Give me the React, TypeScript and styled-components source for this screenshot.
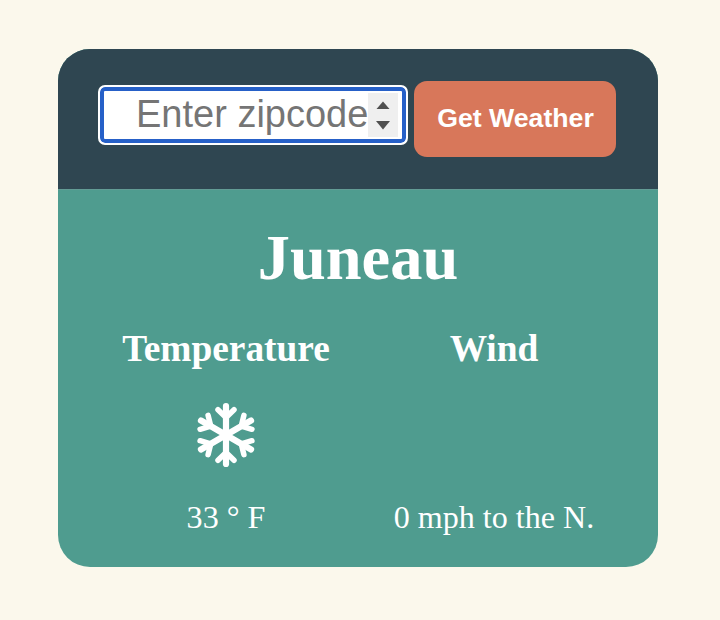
import React from "react";
import styled, { createGlobalStyle } from "styled-components";

const GlobalStyle = createGlobalStyle`
  * { box-sizing: border-box; }
  body { margin: 0; background: #fbf8ec; }
`;

const Page = styled.main`
  height: 620px;
  padding: 49px 62px 0 58px;
  background: #fbf8ec;
  font-family: "Liberation Serif", "Times New Roman", serif;
`;

const Card = styled.section`
  height: 518px;
  border-radius: 32px;
  overflow: hidden;
  background: #4f9c8f;
  color: #fff;
`;

const SearchBar = styled.form`
  display: flex;
  align-items: flex-start;
  height: 140px;
  padding: 32px 42px 0 40px;
  background: #2f4651;
`;

const ZipField = styled.div`
  display: flex;
  align-items: center;
  width: 310px;
  height: 60px;
  margin-top: 4px;
  padding: 0 8px 0 36px;
  border: 2px solid #fff;
  border-radius: 7px;
  background: #fff;
  box-shadow: inset 0 0 0 4px #2660c8;
`;

const ZipInput = styled.input`
  width: 232px;
  height: 46px;
  margin: 0 0 2px;
  padding: 0;
  border: 0;
  outline: 0;
  background: transparent;
  font: 38px "Liberation Sans", Arial, sans-serif;
  &::placeholder { color: #757575; opacity: 1; }
`;

const Stepper = styled.svg`
  display: block;
  flex: none;
  width: 30px;
  height: 44px;
  background: #efefef;
`;

const SubmitButton = styled.button`
  width: 202px;
  height: 76px;
  margin-left: 6px;
  padding: 0 0 2px 1px;
  border: 0;
  border-radius: 13px;
  background: #d8775a;
  color: #fff;
  font: bold 26.7px "Liberation Sans", Arial, sans-serif;
  white-space: nowrap;
`;

const Report = styled.div`
  height: 378px;
  padding-top: 31px;
  border-top: 1px solid #639c95;
`;

const City = styled.h1`
  margin: 0;
  text-align: center;
  font-size: 64.4px;
  line-height: 74px;
`;

const Readings = styled.div`
  display: grid;
  grid-template-columns: 272px 264px;
  padding-left: 32px;
  margin-top: 33px;
`;

const Reading = styled.div`
  display: grid;
  grid-template-rows: 42px 130px 34px;
  justify-items: center;
  align-items: center;
`;

const Label = styled.h2`
  margin: 0;
  font-size: 37.4px;
  line-height: 42px;
`;

const Value = styled.p`
  grid-row: 3;
  margin: 0;
  font-size: 32.1px;
  line-height: 34px;
  white-space: nowrap;
`;

const FlakeIcon = styled.svg`
  display: block;
  width: 64px;
  height: 64px;
  fill: none;
  stroke: #fff;
  stroke-linecap: round;
  stroke-linejoin: round;
`;

const Snowflake = () => (
  <FlakeIcon viewBox="-32 -32 64 64" role="img" aria-label="Snow">
    {[0, 60, 120, 180, 240, 300].map((angle) => (
      <g key={angle} transform={`rotate(${angle})`}>
        <path d="M0 0V-28.9" strokeWidth="6.2" />
        <path d="M-8 -25.3L0 -17.6L8 -25.3" strokeWidth="5.5" />
      </g>
    ))}
  </FlakeIcon>
);

export default function App() {
  return (
    <Page>
      <GlobalStyle />
      <Card>
        <SearchBar onSubmit={(e) => e.preventDefault()}>
          <ZipField>
            <ZipInput placeholder="Enter zipcode" aria-label="Zipcode" />
            <Stepper viewBox="0 0 30 44" aria-hidden="true">
              <path d="M8.5 16l6.5-7.5 6.5 7.5z" fill="#4f4f4f" />
              <path d="M8 28l7 8.5 7-8.5z" fill="#4f4f4f" />
            </Stepper>
          </ZipField>
          <SubmitButton>Get Weather</SubmitButton>
        </SearchBar>
        <Report>
          <City>Juneau</City>
          <Readings>
            <Reading>
              <Label>Temperature</Label>
              <Snowflake />
              <Value>33 ° F</Value>
            </Reading>
            <Reading>
              <Label>Wind</Label>
              <Value>0 mph to the N.</Value>
            </Reading>
          </Readings>
        </Report>
      </Card>
    </Page>
  );
}
